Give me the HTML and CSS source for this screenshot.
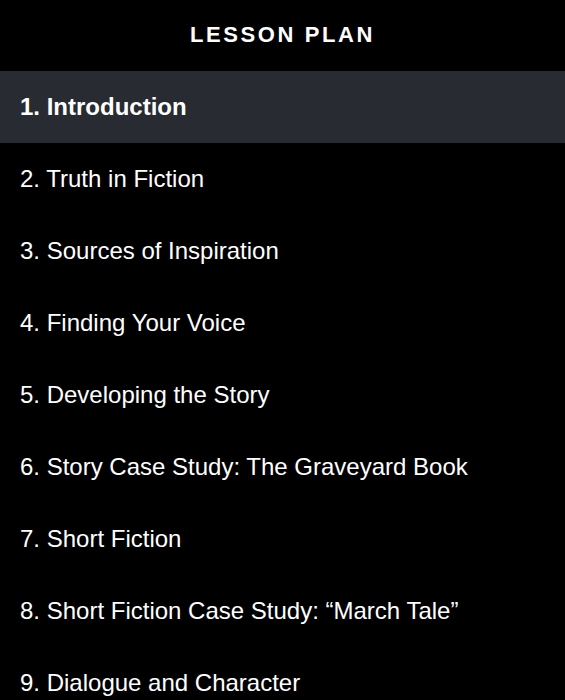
FILE: index.html
```html
<!DOCTYPE html>
<html lang="en">
<head>
    <meta charset="UTF-8">
    <meta name="viewport" content="width=device-width, initial-scale=1.0">
    <title>Lesson Plan</title>
    <link rel="stylesheet" href="styles.css">
</head>
<body>

<div class="panel">
    <h2 class="title">LESSON PLAN</h2>
    <ul class="lessons">
        <li class="lesson active">1. Introduction</li>
        <li class="lesson">2. Truth in Fiction</li>
        <li class="lesson">3. Sources of Inspiration</li>
        <li class="lesson">4. Finding Your Voice</li>
        <li class="lesson">5. Developing the Story</li>
        <li class="lesson">6. Story Case Study: The Graveyard Book</li>
        <li class="lesson">7. Short Fiction</li>
        <li class="lesson">8. Short Fiction Case Study: “March Tale”</li>
        <li class="lesson">9. Dialogue and Character</li>
    </ul>
</div>

</body>
</html>
```

FILE: styles.css
```css
body {
    margin: 0;
    background-color: #000;
    font-family: "Liberation Sans", Arial, sans-serif;
    color: #fff;
}
.panel {
    width: 565px;
}
.title {
    margin: 0;
    height: 71px;
    line-height: 70px;
    text-align: center;
    font-size: 22px;
    font-weight: bold;
    letter-spacing: 2.6px;
}
.lessons {
    list-style: none;
    margin: 0;
    padding: 0;
}
.lesson {
    height: 72px;
    line-height: 72px;
    padding: 0 20px;
    font-size: 24px;
    white-space: nowrap;
}
.active {
    background-color: #282b31;
    font-weight: bold;
}
```
